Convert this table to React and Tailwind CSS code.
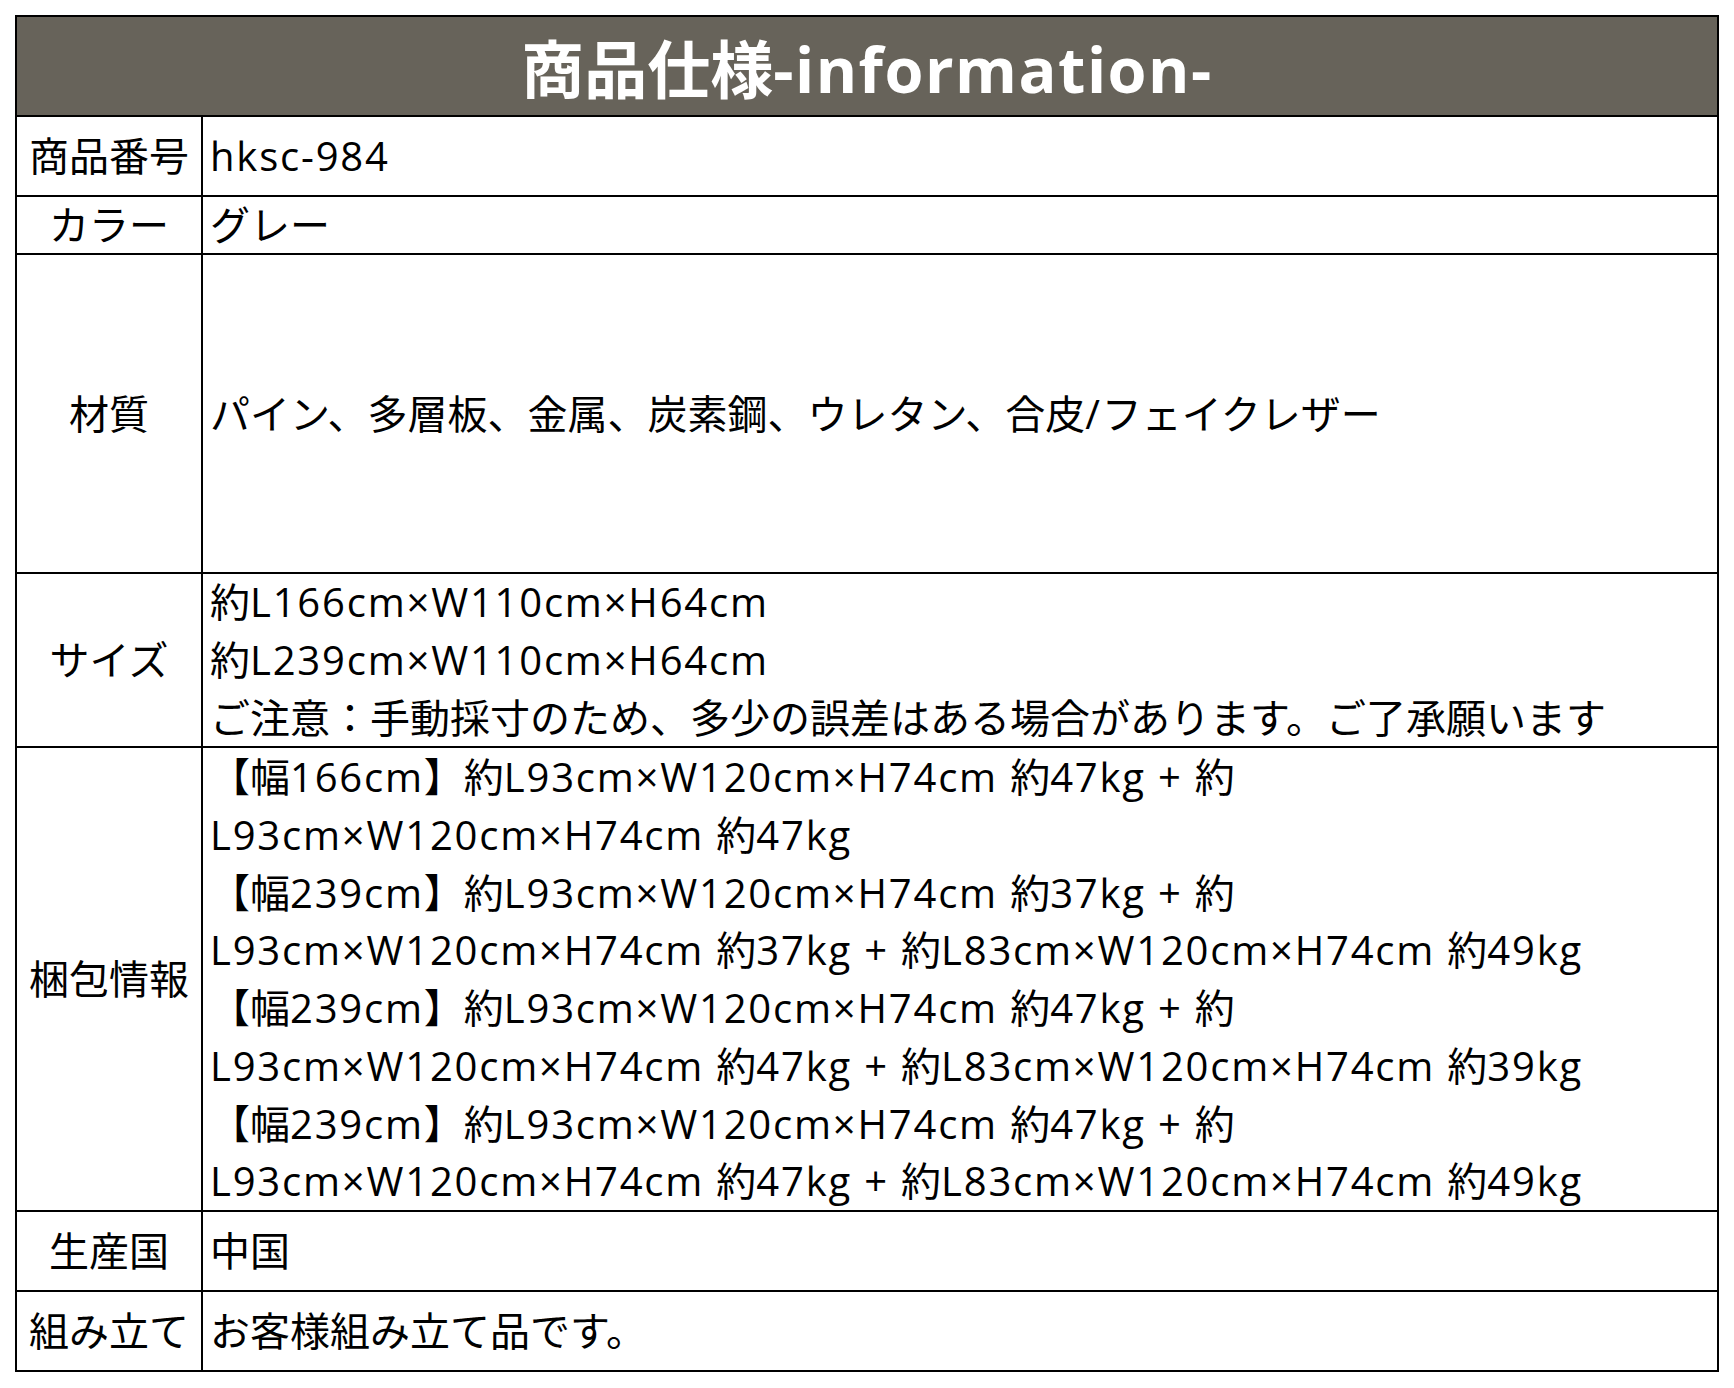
import React from "react";

const FONT = { fontFamily: '"Open Sans", "Noto Sans CJK JP", sans-serif' };

const packing = [
  "【幅166cm】約L93cm×W120cm×H74cm 約47kg + 約",
  "L93cm×W120cm×H74cm 約47kg",
  "【幅239cm】約L93cm×W120cm×H74cm 約37kg + 約",
  "L93cm×W120cm×H74cm 約37kg + 約L83cm×W120cm×H74cm 約49kg",
  "【幅239cm】約L93cm×W120cm×H74cm 約47kg + 約",
  "L93cm×W120cm×H74cm 約47kg + 約L83cm×W120cm×H74cm 約39kg",
  "【幅239cm】約L93cm×W120cm×H74cm 約47kg + 約",
  "L93cm×W120cm×H74cm 約47kg + 約L83cm×W120cm×H74cm 約49kg",
];

// latin runs are set a little looser so they line up with the wider CJK-font latin of the original
function Mixed({ text, track = "tracking-[1.8px]" }) {
  return text.split(/([\x20-\x7E×]+)/).map((part, i) =>
    /[\x20-\x7E×]/.test(part) ? (
      <span key={i} className={track}>{part}</span>
    ) : (
      part
    )
  );
}

function Row({ label, height, lines }) {
  return (
    <div className="flex border-t-2 border-black" style={{ height }}>
      <div className="w-[186px] shrink-0 flex items-center justify-center border-r-2 border-black whitespace-nowrap">
        {label}
      </div>
      <div className="flex-1 flex flex-col justify-center pl-[7px] whitespace-nowrap">
        {lines.map((line, i) => (
          <div key={i}>
            <Mixed text={line} />
          </div>
        ))}
      </div>
    </div>
  );
}

export default function App() {
  return (
    <div className="w-[1734px] h-[1388px] bg-white pt-[15px] pl-[15px]" style={FONT}>
      <div className="w-[1704px] border-2 border-black text-black text-[40px] leading-[57.75px]">
        <div className="h-[98px] bg-[#67635a] flex items-center justify-center">
          <h1 className="text-white font-bold text-[63px] leading-none pt-[4px]">
            <Mixed text="商品仕様-information-" track="tracking-[1.5px]" />
          </h1>
        </div>
        <Row label="商品番号" height={80} lines={["hksc-984"]} />
        <Row label="カラー" height={58} lines={["グレー"]} />
        <Row label="材質" height={319} lines={["パイン、多層板、金属、炭素鋼、ウレタン、合皮/フェイクレザー"]} />
        <Row
          label="サイズ"
          height={174}
          lines={[
            "約L166cm×W110cm×H64cm",
            "約L239cm×W110cm×H64cm",
            "ご注意：手動採寸のため、多少の誤差はある場合があります。ご了承願います",
          ]}
        />
        <Row label="梱包情報" height={464} lines={packing} />
        <Row label="生産国" height={80} lines={["中国"]} />
        <Row label="組み立て" height={80} lines={["お客様組み立て品です。"]} />
      </div>
    </div>
  );
}
